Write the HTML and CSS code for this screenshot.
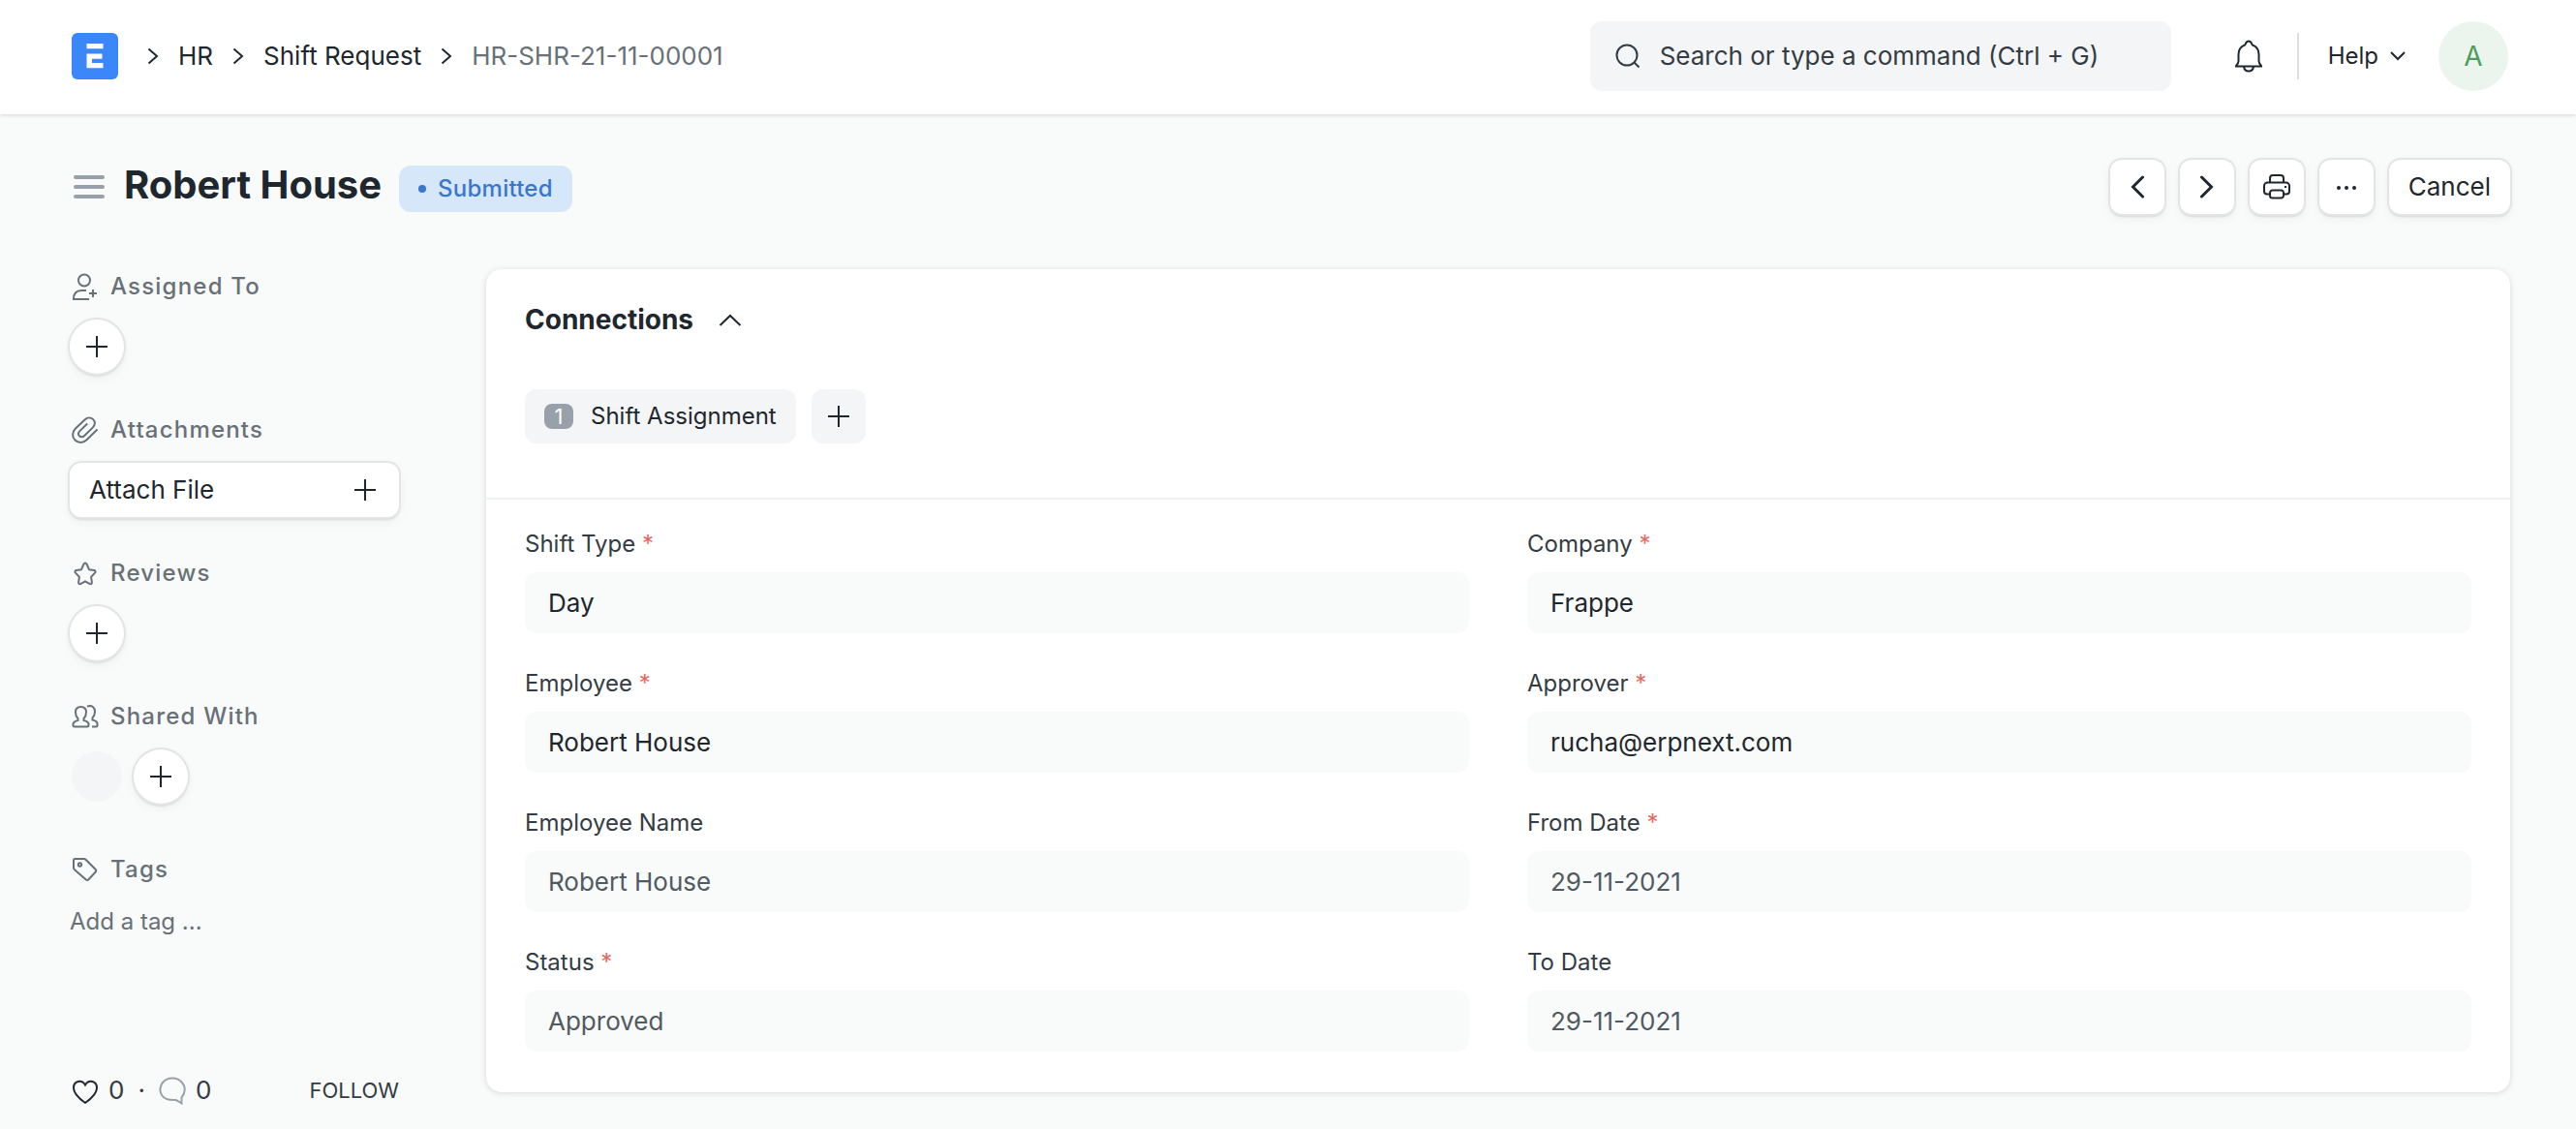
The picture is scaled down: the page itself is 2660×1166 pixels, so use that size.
FILE: index.html
```html
<!DOCTYPE html>
<html lang="en">
<head>
<meta charset="utf-8">
<title>HR-SHR-21-11-00001</title>
<link rel="stylesheet" href="styles.css">
</head>
<body>
<svg class="sprite" aria-hidden="true">
  <symbol id="i-plus" viewBox="0 0 22 22"><path d="M11 0v22M0 11h22"/></symbol>
  <symbol id="i-right" viewBox="0 0 12 18"><path d="M1.500 1.500L10 9l-8.500 7.500"/></symbol>
  <symbol id="i-prev" viewBox="0 0 14 24"><path d="M12.500 2L2.500 12l10 10"/></symbol>
  <symbol id="i-next" viewBox="0 0 14 24"><path d="M1.500 2l10 10-10 10"/></symbol>
</svg>

<header class="navbar">
  <nav class="breadcrumbs" aria-label="Breadcrumb">
    <a class="logo" href="#" aria-label="Home">
      <svg width="48" height="48" viewBox="0 0 48 48"><rect width="48" height="48" rx="6" fill="#3b87fa"/><path d="M15.500 11h17v5.200h-17zM15.500 21.500h16v5.200h-10.500v4.300h11.500v5.200h-17z" fill="#fff"/></svg>
    </a>
    <svg class="sep"><use href="#i-right"/></svg>
    <a href="#">HR</a>
    <svg class="sep"><use href="#i-right"/></svg>
    <a href="#">Shift Request</a>
    <svg class="sep"><use href="#i-right"/></svg>
    <a href="#" class="current" aria-current="page">HR-SHR-21-11-00001</a>
  </nav>
  <div class="nav-right">
    <label class="search">
      <svg width="26" height="26" viewBox="0 0 26 26"><circle cx="12" cy="12" r="10.500"/><path d="M19.500 19.500l5 5"/></svg>
      <input type="text" aria-label="Search" placeholder="Search or type a command (Ctrl + G)">
    </label>
    <button class="bell" aria-label="Notifications">
      <svg width="32" height="34" viewBox="0 0 32 34"><path d="M2 27.500h28M3 27c1.500-1.500 2.500-2.500 2.500-5v-7c0-5 2.500-8 6.500-9.500 1-.5 1-4 4-4s3 3.500 4 4c4 1.500 6.500 4.500 6.500 9.500v7c0 2.500 1 3.500 2.500 5M11 28c1 6 9 6 10 0"/></svg>
    </button>
    <button class="help">Help
      <svg width="16" height="10" viewBox="0 0 16 10"><path d="M1 1l7 7 7-7"/></svg>
    </button>
    <button class="avatar" aria-label="Account">A</button>
  </div>
</header>

<main class="page">
  <div class="page-head">
    <button class="menu" aria-label="Toggle sidebar">
      <svg width="32" height="26" viewBox="0 0 32 26"><path d="M2 3h28M2 13h28M2 23h28"/></svg>
    </button>
    <h1>Robert House</h1>
    <span class="pill">Submitted</span>
    <div class="actions">
      <button class="btn" aria-label="Previous"><svg class="arrow" width="14" height="24"><use href="#i-prev"/></svg></button>
      <button class="btn" aria-label="Next"><svg class="arrow" width="14" height="24"><use href="#i-next"/></svg></button>
      <button class="btn" aria-label="Print">
        <svg width="28" height="26" viewBox="0 0 28 26"><path d="M7 9V4a3 3 0 0 1 3-3h8a3 3 0 0 1 3 3v5M7 20.500H4a3 3 0 0 1-3-3V12a3.500 3.500 0 0 1 3.500-3.500h19A3.500 3.500 0 0 1 27 12v5.500a3 3 0 0 1-3 3h-3M9.500 16.500h9a2.500 2.500 0 0 1 2.500 2.500v3a2.500 2.500 0 0 1-2.500 2.500h-9a2.500 2.500 0 0 1-2.500-2.500v-3a2.500 2.500 0 0 1 2.500-2.500zM22 13h2"/></svg>
      </button>
      <button class="btn" aria-label="More">
        <svg class="dots" width="22" height="6" viewBox="0 0 22 6"><circle cx="3" cy="4" r="2"/><circle cx="11" cy="4" r="2"/><circle cx="19" cy="4" r="2"/></svg>
      </button>
      <button class="btn cancel">Cancel</button>
    </div>
  </div>

  <div class="columns">
    <aside class="sidebar">
      <section>
        <h2><svg width="28" height="28" viewBox="0 0 28 28"><circle cx="13" cy="7.500" r="6"/><path d="M18 27H2c0-6 3-9 8-9h5M22 17v8M18 21h8"/></svg>Assigned To</h2>
        <button class="btn round" aria-label="Assign"><svg width="22" height="22"><use href="#i-plus"/></svg></button>
      </section>
      <section>
        <h2><svg width="28" height="28" viewBox="0 0 28 28"><path d="M26.500 13.500L15.500 24.200c-4 4-9 3.300-12 .3s-3.500-8 .5-12L13.500 3.500c3-3 6.500-2.500 8.700-.4 2.200 2.200 2.500 5.500-.5 8.500l-8.500 8.400c-2 2-4 1.500-5.200.3s-1.500-3.200.4-5.200l7.800-7.600"/></svg>Attachments</h2>
        <button class="btn attach">Attach File <svg width="22" height="22"><use href="#i-plus"/></svg></button>
      </section>
      <section>
        <h2><svg width="28" height="28" viewBox="0 0 28 28"><path d="M14 3.500c.7 0 1.200.4 1.500 1l2.600 5.800 5.300.8c1.200.2 1.600 1.500.8 2.300l-4.100 4.400.8 5.800c.2 1.200-1 2-2 1.400L14 22.400l-4.900 2.600c-1 .6-2.200-.2-2-1.400l.8-5.800-4.100-4.400c-.8-.8-.4-2.100.8-2.300l5.300-.8 2.600-5.800c.3-.6.800-1 1.500-1z"/></svg>Reviews</h2>
        <button class="btn round" aria-label="Add review"><svg width="22" height="22"><use href="#i-plus"/></svg></button>
      </section>
      <section class="shared">
        <h2><svg width="28" height="28" viewBox="0 0 28 28"><path d="M9.500 4c-3.500 0-5.500 2.200-5.500 5.500 0 3 1 5 2.500 6.500v2c-3 .8-5 1.800-5 4V23c0 1 .5 1.500 1.500 1.500h13c1 0 1.500-.5 1.500-1.500v-1c0-2.200-2-3.200-5-4v-2c1.500-1.500 2.500-3.500 2.500-6.500C15 6.200 13 4 9.500 4zM16 3.500c5-1.500 8 1 8 5.500 0 3-1 5-2.500 6.500v2c3 .8 5 1.800 5 4V23c0 1-.5 1.500-1.500 1.500h-4"/></svg>Shared With</h2>
        <div class="people"><span class="person"></span><button class="btn round" aria-label="Share"><svg width="22" height="22"><use href="#i-plus"/></svg></button></div>
      </section>
      <section>
        <h2><svg width="28" height="28" viewBox="0 0 28 28"><path d="M3.500 3h9c.8 0 1.500.3 2 .8l10 10c1 1 1 2 0 3l-7 7.500c-1 1-2 1-3 0L2.800 14c-.5-.5-.8-1.200-.8-2V4.500C2 3.500 2.500 3 3.500 3z"/><circle cx="8.500" cy="9" r="1.700"/></svg>Tags</h2>
        <input class="tag-input" type="text" aria-label="Add a tag" placeholder="Add a tag ...">
      </section>
      <footer class="stats">
        <button class="stat"><svg width="28" height="28" viewBox="0 0 28 28"><path class="heart" d="M14 27C9 23.500 2 18 2 11.500 2 4 10.500 2.500 14 8.500c3.500-6 12-4.500 12 3C26 18 19 23.500 14 27z"/></svg>0</button>
        <span class="dot">·</span>
        <button class="stat comment"><svg width="28" height="30" viewBox="0 0 28 30"><path d="M23.500 28.500v-6c5-6 3.500-12 .5-15.500C19 1 9 1 4 7c-3 3.500-3.500 9-1 13 3 4.500 8 5.500 14.500 5 2 1 4 2 6 3.500z"/></svg>0</button>
        <button class="follow">FOLLOW</button>
      </footer>
    </aside>

    <div class="content">
      <form class="card">
        <section class="connections">
          <h3><button type="button" class="toggle">Connections <svg width="24" height="14" viewBox="0 0 24 14"><path d="M1.500 13L12 3l10.500 10"/></svg></button></h3>
          <div class="links">
            <a class="chip" href="#"><span class="count">1</span>Shift Assignment</a>
            <button type="button" class="chip add" aria-label="New Shift Assignment"><svg width="22" height="22"><use href="#i-plus"/></svg></button>
          </div>
        </section>
        <section class="fields">
          <div class="field"><label for="type">Shift Type <span class="req">*</span></label><input id="type" value="Day" readonly></div>
          <div class="field"><label for="company">Company <span class="req">*</span></label><input id="company" value="Frappe" readonly></div>
          <div class="field"><label for="employee">Employee <span class="req">*</span></label><input id="employee" value="Robert House" readonly></div>
          <div class="field"><label for="approver">Approver <span class="req">*</span></label><input id="approver" value="rucha@erpnext.com" readonly></div>
          <div class="field"><label for="name">Employee Name</label><input id="name" class="muted" value="Robert House" readonly></div>
          <div class="field"><label for="from">From Date <span class="req">*</span></label><input id="from" class="muted" value="29-11-2021" readonly></div>
          <div class="field"><label for="status">Status <span class="req">*</span></label><input id="status" class="muted" value="Approved" readonly></div>
          <div class="field"><label for="to">To Date</label><input id="to" class="muted" value="29-11-2021" readonly></div>
        </section>
      </form>
    </div>
  </div>
</main>
</body>
</html>
```
FILE: styles.css
```css
* { box-sizing: border-box; }

body {
  margin: 0;
  background: #f9fafa;
  color: #1f272e;
  font: 26px/32px Inter, "Liberation Sans", sans-serif;
}

a { color: inherit; text-decoration: none; }
h1, h2, h3 { margin: 0; }

button, input {
  margin: 0;
  padding: 0;
  border: 0;
  background: none;
  color: inherit;
  font: inherit;
}

button { cursor: pointer; }

svg {
  flex: none;
  fill: none;
  stroke: currentColor;
  stroke-width: 2;
}

.sprite { display: none; }

/* Top bar */
.navbar {
  display: flex;
  align-items: center;
  justify-content: space-between;
  height: 118px;
  padding: 0 70px 2px 74px;
  background: #fff;
  box-shadow: 0 1px 4px rgba(0, 0, 0, 0.15);
}

.breadcrumbs { display: flex; align-items: center; }
.logo { display: flex; margin-right: 10px; }
.logo svg { stroke: none; }

.sep {
  width: 12px;
  height: 18px;
  margin: 0 20px;
}

.current { color: #687178; }

.nav-right { display: flex; align-items: center; }

.search {
  display: flex;
  align-items: center;
  gap: 20px;
  width: 600px;
  height: 72px;
  padding: 0 26px;
  border-radius: 12px;
  background: #f4f5f6;
  color: #333c44;
}

.search input { flex: 1; min-width: 0; }
::placeholder { color: inherit; opacity: 1; }

.bell {
  display: flex;
  margin-left: 64px;
}

.help {
  display: flex;
  align-items: center;
  gap: 12px;
  height: 48px;
  margin-left: 34px;
  padding: 0 34px 0 30px;
  border-left: 2px solid #dcdfe1;
  font-size: 24px;
}

.avatar {
  width: 72px;
  height: 72px;
  border-radius: 50%;
  background: #ebf5ee;
  color: #4f9d5d;
  font-size: 28px;
}

/* Page head */
.page { padding: 0 68px 0 72px; }

.page-head {
  display: flex;
  align-items: center;
  padding-top: 47px;
}

.menu {
  display: flex;
  margin-right: 16px;
  padding: 0 4px;
  color: #98a1a9;
}

.menu path { stroke-width: 4; stroke-linecap: round; }

h1 {
  padding-bottom: 4px;
  font-size: 40px;
  line-height: 48px;
}

.pill {
  display: flex;
  align-items: center;
  gap: 12px;
  height: 48px;
  margin: 4px 0 0 18px;
  padding: 0 20px;
  border-radius: 12px;
  background: #d7e7fa;
  color: #3877cd;
  font-size: 24px;
  font-weight: 500;
  letter-spacing: 0.01em;
}

.pill::before {
  width: 8px;
  height: 8px;
  border-radius: 50%;
  background: currentColor;
  content: "";
}

.actions {
  display: flex;
  gap: 16px;
  margin-left: auto;
}

.btn {
  display: flex;
  align-items: center;
  justify-content: center;
  width: 56px;
  height: 56px;
  border-radius: 12px;
  background: #fff;
  box-shadow: 0 0 0 2px #e2e4e5, 0 2px 3px rgba(0, 0, 0, 0.2), 0 4px 12px rgba(0, 0, 0, 0.06);
}

.cancel { width: auto; padding: 0 20px; }
.arrow { stroke-width: 3; stroke-linecap: round; }
.dots { fill: currentColor; stroke: none; }

/* Sidebar */
.columns {
  display: grid;
  grid-template-columns: 340px 1fr;
  gap: 90px;
  padding-top: 57px;
}

.sidebar {
  display: flex;
  flex-direction: column;
  min-height: 864px;
}

.sidebar section { margin-bottom: 40px; }
.sidebar .shared { margin-bottom: 50px; }

h2 {
  display: flex;
  align-items: center;
  gap: 12px;
  margin-bottom: 18px;
  padding: 2px 0 0 2px;
  color: #687178;
  font-size: 24px;
  font-weight: 500;
  letter-spacing: 0.05em;
}

.round { border-radius: 50%; }

.people {
  display: flex;
  align-items: center;
  gap: 12px;
  padding-left: 2px;
}

.person {
  width: 52px;
  height: 52px;
  border-radius: 50%;
  background: #f4f5f6;
}

.attach {
  justify-content: space-between;
  width: 100%;
  padding: 0 24px 0 20px;
}

.tag-input {
  width: 100%;
  padding-top: 4px;
  color: #687178;
  font-size: 24px;
}

.stats {
  display: flex;
  align-items: center;
  margin-top: auto;
  padding-left: 2px;
  color: #333c44;
}

.stat { display: flex; align-items: center; gap: 10px; }
.heart { stroke: #1f272e; }
.dot { margin: 0 14px; }
.comment svg { color: #98a1a9; }
.follow { margin-left: auto; font-size: 22px; }

/* Form card */
.card {
  border-radius: 16px;
  background: #fff;
  box-shadow: 0 1px 6px rgba(0, 0, 0, 0.14);
}

.connections {
  padding: 36px 40px 56px;
  border-bottom: 2px solid #f1f2f3;
}

.toggle {
  display: flex;
  align-items: center;
  gap: 26px;
  font-size: 28px;
  font-weight: 700;
}

.links {
  display: flex;
  gap: 16px;
  margin-top: 56px;
}

.chip {
  display: flex;
  align-items: center;
  justify-content: center;
  gap: 18px;
  height: 56px;
  padding: 0 20px;
  border-radius: 12px;
  background: #f4f5f6;
  font-size: 24px;
}

.chip.add { width: 56px; padding: 0; }

.count {
  width: 30px;
  height: 26px;
  border-radius: 8px;
  background: #98a1a9;
  color: #fff;
  font-size: 22px;
  line-height: 26px;
  text-align: center;
}

.fields {
  display: grid;
  grid-template-columns: 1fr 1fr;
  gap: 36px 60px;
  padding: 30px 40px 42px;
}

.field label {
  display: block;
  margin-bottom: 13px;
  color: #333c44;
  font-size: 24px;
}

.req { color: #e2695f; }

.field input {
  display: block;
  width: 100%;
  height: 63px;
  padding: 0 24px;
  border-radius: 12px;
  background: #f9fafa;
}

.field .muted { color: #505a62; }
```
